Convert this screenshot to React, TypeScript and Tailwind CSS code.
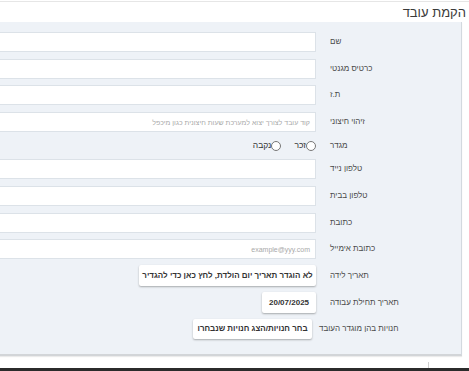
import React from "react";

const font = { fontFamily: '"Liberation Sans", "Open Sans", "DejaVu Sans", sans-serif' };

function Label({ text, wide }: { text: string; wide?: boolean }) {
  return (
    <div
      className={`${wide ? "w-[142px] ml-[7px]" : "w-[131px] ml-[14px]"} shrink-0 text-left text-[8px] text-[#4a4a4a] leading-none whitespace-nowrap`}
    >
      {text}
    </div>
  );
}

function InputRow({ label, mt, placeholder }: { label: string; mt: string; placeholder?: string }) {
  return (
    <div className={`flex items-center ${mt}`}>
      <Label text={label} />
      <div className="flex-1 h-[20px] bg-white border border-[#dce2e8] flex items-center pr-[5px]">
        {placeholder && <span className="text-[7px] text-[#a9a9a9] leading-none whitespace-nowrap">{placeholder}</span>}
      </div>
    </div>
  );
}

function Radio({ text }: { text: string }) {
  return (
    <div className="flex items-center">
      <span className="w-[10px] h-[10px] rounded-full border border-[#777] bg-white inline-block" />
      <span className="text-[8.5px] text-[#333] leading-none">{text}</span>
    </div>
  );
}

export default function App() {
  return (
    <div dir="rtl" style={font} className="w-[469px] h-[371px] bg-white overflow-hidden relative">
      <div className="h-[21px] border-t border-[#e6e6e6] flex items-center pr-[3px] mt-[1px]">
        <span className="text-[13px] text-[#3a3a3a] leading-none">הקמת עובד</span>
      </div>
      <div className="w-[482px] mr-[7px] bg-[#eef2f7] border-r border-r-[#d3d9df] border-b-2 border-b-[#d2d5d8] pt-[10px] pb-[15px] shadow-[0_1px_1px_rgba(0,0,0,0.08)]">
        <InputRow label="שם" mt="mt-0" />
        <InputRow label="כרטיס מגנטי" mt="mt-[7px]" />
        <InputRow label="ת.ז" mt="mt-[6px]" />
        <InputRow label="זיהוי חיצוני" mt="mt-[7px]" placeholder="קוד עובד לצורך יצוא למערכת שעות חיצונית כגון מיכפל" />
        <div className="flex items-center mt-[6px] h-[15px]">
          <Label text="מגדר" />
          <div className="flex items-center gap-[13px]">
            <Radio text="זכר" />
            <Radio text="נקבה" />
          </div>
        </div>
        <InputRow label="טלפון נייד" mt="mt-[6px]" />
        <InputRow label="טלפון בבית" mt="mt-[7px]" />
        <InputRow label="כתובת" mt="mt-[7px]" />
        <InputRow label="כתובת אימייל" mt="mt-[6px]" placeholder="example@yyy.com" />
        <div className="flex items-center mt-[6px]">
          <Label text="תאריך לידה" />
          <div className="w-[177px] h-[21px] bg-white rounded-[2px] shadow-[0_1px_2px_rgba(0,0,0,0.3)] flex items-center justify-center text-[8px] font-bold text-[#333] leading-none whitespace-nowrap">
            לא הוגדר תאריך יום הולדת, לחץ כאן כדי להגדיר
          </div>
        </div>
        <div className="flex items-center mt-[6px]">
          <Label text="תאריך תחילת עבודה" />
          <div className="w-[54px] h-[21px] bg-white rounded-[2px] shadow-[0_1px_2px_rgba(0,0,0,0.3)] flex items-center justify-center text-[8px] font-bold text-[#333] leading-none">
            20/07/2025
          </div>
        </div>
        <div className="flex items-center mt-[6px]">
          <Label text="חנויות בהן מוגדר העובד" wide />
          <div className="w-[119px] h-[20px] bg-white rounded-[2px] shadow-[0_1px_2px_rgba(0,0,0,0.3)] flex items-center justify-center text-[8px] font-bold text-[#333] leading-none whitespace-nowrap">
            בחר חנויות/הצג חנויות שנבחרו
          </div>
        </div>
      </div>
      <div className="absolute left-[428px] top-[362px] w-[1px] h-[6px] bg-[#cfcfcf]" />
      <div className="absolute left-0 right-0 bottom-0 h-[3px] bg-[#2b2b2b]" />
    </div>
  );
}
